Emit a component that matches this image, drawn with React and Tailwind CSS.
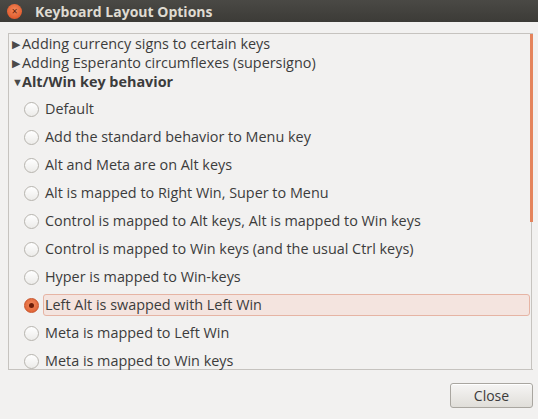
import { useState } from 'react';

const GROUPS = [
  'Adding currency signs to certain keys',
  'Adding Esperanto circumflexes (supersigno)',
];

const OPTIONS = [
  'Default',
  'Add the standard behavior to Menu key',
  'Alt and Meta are on Alt keys',
  'Alt is mapped to Right Win, Super to Menu',
  'Control is mapped to Alt keys, Alt is mapped to Win keys',
  'Control is mapped to Win keys (and the usual Ctrl keys)',
  'Hyper is mapped to Win-keys',
  'Left Alt is swapped with Left Win',
  'Meta is mapped to Left Win',
  'Meta is mapped to Win keys',
];

const Radio = ({ checked }) => (
  <span
    className={
      'w-[15px] h-[15px] rounded-full shrink-0 flex items-center justify-center border ' +
      (checked
        ? 'border-[#c8532a] bg-[radial-gradient(circle_at_50%_40%,#f08a5d,#dd5a2c)]'
        : 'border-[#b7b4ae] bg-[linear-gradient(#ffffff,#ecebe9)]')
    }
  >
    {checked && <span className="w-[5px] h-[5px] rounded-full bg-[#6b1d08]" />}
  </span>
);

export default function App() {
  const [selected, setSelected] = useState(7);

  return (
    <div className="w-[538px] h-[419px] flex flex-col bg-[#f2f1f0] font-['Open_Sans',sans-serif] text-[14.4px] text-[#3c3c3c] overflow-hidden">
      {/* title bar */}
      <div className="h-[22px] shrink-0 flex items-center bg-[linear-gradient(#4a4945,#3c3b37)] pl-[7px]">
        <span className="w-[15px] h-[15px] rounded-full bg-[radial-gradient(circle_at_50%_40%,#f58a5b,#d8491c)] flex items-center justify-center text-[#5a1a06] text-[10px] leading-none">
          ×
        </span>
        <span className="ml-[13px] font-bold text-[#dfdbd2] text-[14px]">Keyboard Layout Options</span>
      </div>

      <div className="flex-1 flex flex-col pl-[8px] pr-[5px] pt-[11px]">
        <div className="h-[337px] flex border border-[#c6c3bf] border-r-0 bg-[#f2f1f0]">
          <div className="flex-1 flex flex-col pl-[3px]">
            {GROUPS.map(g => (
              <div key={g} className="h-[19px] flex items-center">
                <span className="w-[10px] text-[11px] text-[#4a4a4a] leading-none">▶</span>
                <span>{g}</span>
              </div>
            ))}
            <div className="h-[19px] flex items-center">
              <span className="w-[10px] text-[11px] text-[#4a4a4a] leading-none">▼</span>
              <span className="font-bold">Alt/Win key behavior</span>
            </div>
            <div className="flex flex-col pt-[4px]">
              {OPTIONS.map((o, i) => (
                <div
                  key={o}
                  className="h-[28px] flex items-center cursor-pointer"
                  onClick={() => setSelected(i)}
                >
                  <span className="ml-[12px] w-[19px]">
                    <Radio checked={selected === i} />
                  </span>
                  <span
                    className={
                      'flex-1 h-[22px] flex items-center pl-[1px] rounded-[3px] border ' +
                      (selected === i ? 'bg-[#f4e4df] border-[#e6b4a4]' : 'border-transparent')
                    }
                  >
                    {o}
                  </span>
                </div>
              ))}
            </div>
          </div>
          <div className="w-[3px] flex flex-col">
            <div className="h-[188px] w-[3px] bg-[#e5845c]" />
            <div className="flex-1 w-[1px] ml-[1px] bg-[#c6c3bf]" />
          </div>
        </div>

        <div className="flex justify-end pt-[13px]">
          <button className="w-[83px] h-[25px] rounded-[3px] border border-[#a9a6a0] bg-[linear-gradient(#f6f5f4,#e0ded9)] text-[14px] text-[#3c3c3c] shadow-[inset_0_1px_0_#fff]">
            Close
          </button>
        </div>
      </div>
    </div>
  );
}
